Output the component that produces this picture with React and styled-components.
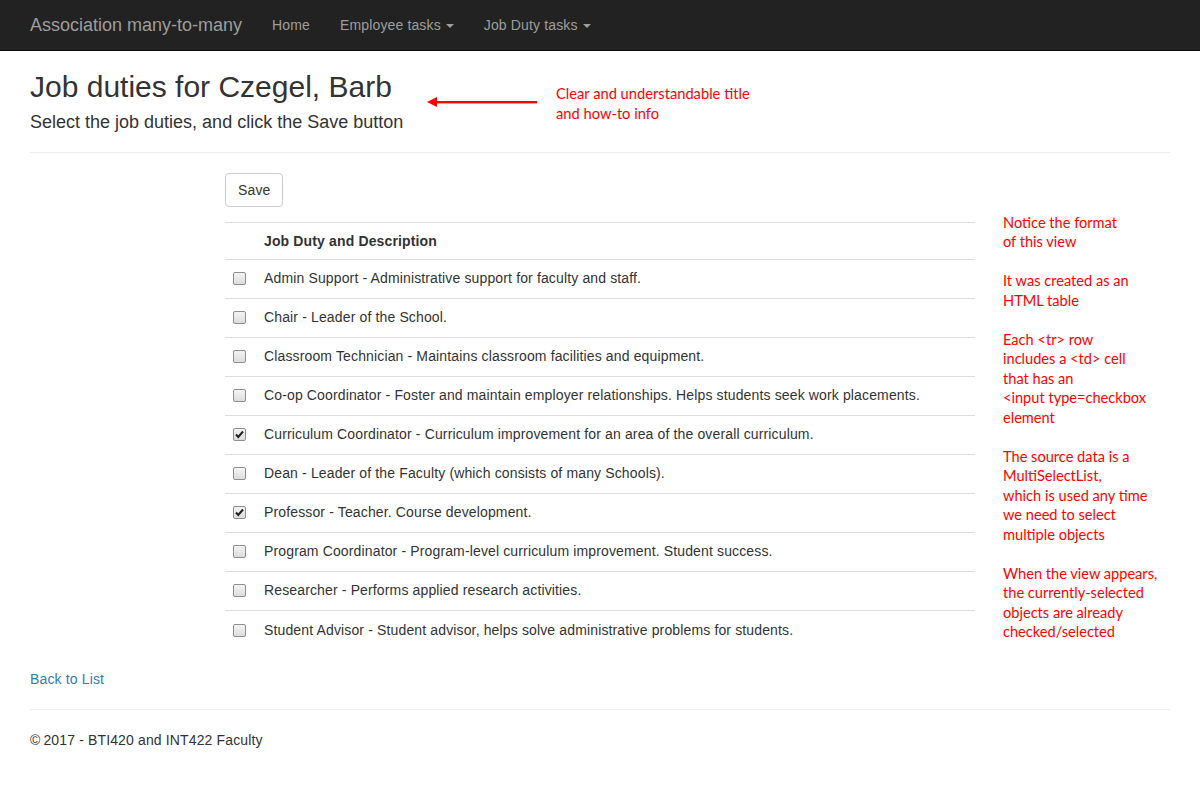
import React from "react";
import styled, { createGlobalStyle } from "styled-components";

const Global = createGlobalStyle`
  html, body { margin: 0; padding: 0; background: #fff; }
  body {
    font-family: "Liberation Sans", Arial, sans-serif;
    font-size: 14px;
    line-height: 1.42857143;
    letter-spacing: 0.14px;
    color: #333;
  }
  * { box-sizing: border-box; }
`;

const Navbar = styled.nav`
  height: 51px;
  background: #222;
  border-bottom: 1px solid #080808;
`;

const NavInner = styled.div`
  width: 1170px;
  margin: 0 auto;
  padding: 0 15px;
  display: flex;
  align-items: center;
  height: 50px;
`;

const Brand = styled.a`
  font-size: 18px;
  line-height: 20px;
  letter-spacing: 0;
  color: #9d9d9d;
  padding: 15px 15px 15px 0;
  text-decoration: none;
`;

const NavLink = styled.a`
  display: flex;
  align-items: center;
  gap: 5px;
  color: #9d9d9d;
  font-size: 14px;
  line-height: 20px;
  padding: 15px;
  text-decoration: none;
`;

const Caret = styled.span`
  display: inline-block;
  width: 0;
  height: 0;
  border-top: 4px solid #9d9d9d;
  border-left: 4px solid transparent;
  border-right: 4px solid transparent;
  margin-top: 2px;
`;

const Container = styled.main`
  width: 1170px;
  margin: 0 auto;
  padding: 0 15px;
`;

const Header = styled.header`
  position: relative;
  letter-spacing: 0;
`;

const Title = styled.h2`
  font-size: 30px;
  font-weight: 500;
  line-height: 1.1;
  margin: 19px 0 0;
  color: #333;
`;

const Subtitle = styled.h4`
  font-size: 18px;
  font-weight: 500;
  line-height: 1.1;
  margin: 10px 0 0;
  color: #333;
`;

const Callout = styled.div`
  position: absolute;
  left: 397px;
  top: 26px;
  display: flex;
  align-items: flex-start;
  gap: 19px;
`;

const CalloutText = styled.div`
  font-family: Lato, "Noto Sans", sans-serif;
  font-size: 14.7px;
  line-height: 20px;
  color: #f00;
  margin-top: -13px;
`;

const Rule = styled.hr`
  border: 0;
  border-top: 1px solid #eee;
  margin: ${(p) => p.$top}px 0 20px;
`;

const Grid = styled.div`
  display: grid;
  grid-template-columns: 195px 780px 195px;
  margin: 0 -15px;
`;

const Main = styled.section`
  grid-column: 2;
  padding: 0 15px;
`;

const Notes = styled.aside`
  grid-column: 3;
  padding: 40px 0 0 13px;
  font-family: Lato, "Noto Sans", sans-serif;
  font-size: 14.6px;
  line-height: 19.5px;
  letter-spacing: 0;
  color: #f00;
`;

const Note = styled.p`
  margin: 0 0 19.5px;
  white-space: pre-line;
`;

const Button = styled.button`
  font-family: "Liberation Sans", Arial, sans-serif;
  font-size: 14px;
  line-height: 20px;
  letter-spacing: 0.14px;
  height: 34px;
  padding: 6px 12px;
  color: #333;
  background: #fff;
  border: 1px solid #ccc;
  border-radius: 4px;
  margin-bottom: 15px;
  display: block;
`;

const Table = styled.table`
  width: 100%;
  border-collapse: collapse;
  margin-bottom: 20px;
`;

const Th = styled.th`
  text-align: left;
  font-weight: bold;
  padding: 8px;
  line-height: 20px;
  border-top: 1px solid #ddd;
  border-bottom: 1px solid #ddd;
  width: ${(p) => (p.$narrow ? "31px" : "auto")};
`;

const Td = styled.td`
  padding: 0 8px 1px;
  height: 39px;
  border-top: 1px solid #ddd;
  vertical-align: middle;
  width: ${(p) => (p.$narrow ? "31px" : "auto")};
`;

const Tr = styled.tr`
  &:first-child td { border-top: 0; }
`;

const Box = styled.span`
  display: block;
  width: 13px;
  height: 13px;
  border: 1px solid #8f8f8f;
  border-radius: 2px;
  background: linear-gradient(#f4f4f4, #dcdcdc);
  margin-top: 1px;
  position: relative;
`;

const Check = ({ checked }) => (
  <Box>
    {checked && (
      <svg width="11" height="11" viewBox="0 0 11 11" style={{ position: "absolute", left: 0, top: 0 }}>
        <path d="M2 5.5 L4.3 8 L9 2.5" fill="none" stroke="#222" strokeWidth="2" />
      </svg>
    )}
  </Box>
);

const Link = styled.a`
  color: #337ab7;
  text-decoration: none;
  display: block;
  line-height: 20px;
`;

const Footer = styled.footer`
  line-height: 20px;
  margin-bottom: 20px;
`;

const rows = [
  ["Admin Support - Administrative support for faculty and staff.", false],
  ["Chair - Leader of the School.", false],
  ["Classroom Technician - Maintains classroom facilities and equipment.", false],
  ["Co-op Coordinator - Foster and maintain employer relationships. Helps students seek work placements.", false],
  ["Curriculum Coordinator - Curriculum improvement for an area of the overall curriculum.", true],
  ["Dean - Leader of the Faculty (which consists of many Schools).", false],
  ["Professor - Teacher. Course development.", true],
  ["Program Coordinator - Program-level curriculum improvement. Student success.", false],
  ["Researcher - Performs applied research activities.", false],
  ["Student Advisor - Student advisor, helps solve administrative problems for students.", false],
];

const notes = [
  "Notice the format\nof this view",
  "It was created as an\nHTML table",
  "Each <tr> row\nincludes a <td> cell\nthat has an\n<input type=checkbox\nelement",
  "The source data is a\nMultiSelectList,\nwhich is used any time\nwe need to select\nmultiple objects",
  "When the view appears,\nthe currently-selected\nobjects are already\nchecked/selected",
];

export default function App() {
  return (
    <>
      <Global />
      <Navbar>
        <NavInner>
          <Brand href="#">Association many-to-many</Brand>
          <NavLink href="#">Home</NavLink>
          <NavLink href="#">Employee tasks <Caret /></NavLink>
          <NavLink href="#">Job Duty tasks <Caret /></NavLink>
        </NavInner>
      </Navbar>
      <Container>
        <Header>
          <Title>Job duties for Czegel, Barb</Title>
          <Subtitle>Select the job duties, and click the Save button</Subtitle>
          <Callout>
            <svg width="110" height="12" viewBox="0 0 110 12">
              <path d="M0 6 L10 1 L10 11 Z" fill="#f00" />
              <rect x="8" y="5" width="102" height="2.4" fill="#f00" />
            </svg>
            <CalloutText>
              Clear and understandable title
              <br />
              and how-to info
            </CalloutText>
          </Callout>
        </Header>
        <Rule $top={19} />
        <Grid>
          <Main>
            <Button>Save</Button>
            <Table>
              <thead>
                <tr>
                  <Th $narrow />
                  <Th>Job Duty and Description</Th>
                </tr>
              </thead>
              <tbody>
                {rows.map(([text, checked]) => (
                  <Tr key={text}>
                    <Td $narrow>
                      <Check checked={checked} />
                    </Td>
                    <Td>{text}</Td>
                  </Tr>
                ))}
              </tbody>
            </Table>
          </Main>
          <Notes>
            {notes.map((n) => (
              <Note key={n}>{n}</Note>
            ))}
          </Notes>
        </Grid>
        <Link href="#">Back to List</Link>
        <Rule $top={20} />
        <Footer>©&#8201;2017 - BTI420 and INT422 Faculty</Footer>
      </Container>
    </>
  );
}
